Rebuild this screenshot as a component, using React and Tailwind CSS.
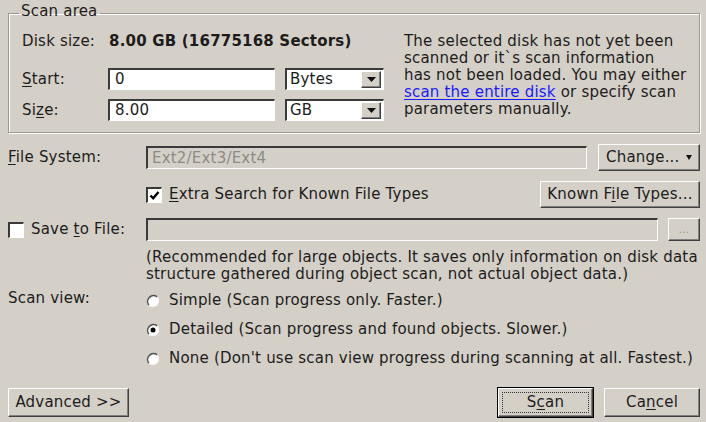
import React from 'react';

const raised =
  "bg-[#d4d0c8] border border-t-white border-l-white border-r-[#404040] border-b-[#404040] shadow-[inset_-1px_-1px_0_#808080]";
const sunken =
  "border-t-2 border-l-2 border-t-[#3a3a3a] border-l-[#3a3a3a] border-b border-r border-b-white border-r-white";

function U({ children }) {
  return <span className="underline underline-offset-2">{children}</span>;
}

function Arrow({ w = 9 }) {
  return (
    <svg width={w} height="5" viewBox="0 0 9 5" preserveAspectRatio="none">
      <path d="M0 0 H9 L4.5 5 Z" fill="#111" />
    </svg>
  );
}

function Combo({ value }) {
  return (
    <div className={`w-[99px] h-[22px] bg-white flex items-center ${sunken}`}>
      <span className="flex-1 pl-[3px]">{value}</span>
      <div className={`w-[20px] h-[17px] mr-[2px] flex items-center justify-center ${raised}`}>
        <Arrow w={9} />
      </div>
    </div>
  );
}

function CheckBox({ checked }) {
  return (
    <div className={`w-[16px] h-[16px] bg-white shrink-0 flex items-center justify-center ${sunken}`}>
      {checked && (
        <svg width="11" height="11" viewBox="0 0 11 11">
          <path d="M1.5 5.5 L4.2 8.3 L9.5 2" stroke="#000" strokeWidth="2.4" fill="none" />
        </svg>
      )}
    </div>
  );
}

function Radio({ checked }) {
  return (
    <svg width="14" height="14" viewBox="0 0 14 14" className="shrink-0">
      <circle cx="7" cy="7" r="6" fill="#fff" />
      <path d="M2.8 11.2 A6 6 0 0 1 11.2 2.8" stroke="#555" strokeWidth="1.6" fill="none" />
      <path d="M11.2 2.8 A6 6 0 0 1 2.8 11.2" stroke="#f4f4f4" strokeWidth="1.2" fill="none" />
      {checked && <circle cx="7" cy="7" r="2.5" fill="#000" />}
    </svg>
  );
}

function RadioRow({ checked, children }) {
  return (
    <div className="h-[29px] flex items-center gap-[9px]">
      <Radio checked={checked} />
      <span className="whitespace-nowrap">{children}</span>
    </div>
  );
}

export default function App() {
  return (
    <div className="w-[706px] h-[422px] bg-[#d4d0c8] text-[#1c1c1c] text-[15px] tracking-[0.2px] leading-[17px] font-['DejaVu_Sans',sans-serif] flex flex-col pl-[8px] pr-[6px] pt-[4px] overflow-hidden">
      {/* Scan area */}
      <fieldset className="border border-[#9c988f] shadow-[inset_1px_1px_0_#fff,1px_1px_0_#fff] pl-[13px] pr-[8px] pt-[10px] pb-[11px] m-0">
        <legend className="-ml-[3px] px-[2px] leading-[14px] pb-[5px]">Scan area</legend>
        <div className="flex items-start">
          <div className="w-[362px] flex flex-col">
            <div className="flex items-center h-[17px]">
              <span className="w-[87px]">Disk size:</span>
              <span className="font-bold whitespace-nowrap">8.00 GB (16775168 Sectors)</span>
            </div>
            <div className="flex items-center mt-[18px]">
              <span className="w-[86px]"><U>S</U>tart:</span>
              <div className={`w-[167px] h-[22px] bg-white flex items-center pl-[5px] ${sunken}`}>0</div>
              <div className="ml-[10px]"><Combo value="Bytes" /></div>
            </div>
            <div className="flex items-center mt-[9px]">
              <span className="w-[86px]">Si<U>z</U>e:</span>
              <div className={`w-[167px] h-[22px] bg-white flex items-center pl-[5px] ${sunken}`}>8.00</div>
              <div className="ml-[10px]"><Combo value="GB" /></div>
            </div>
          </div>
          <p className="ml-[20px] whitespace-nowrap">
            The selected disk has not yet been<br />
            scanned or it`s scan information<br />
            has not been loaded. You may either<br />
            <span className="text-[#1a1aff] underline underline-offset-2">scan the entire disk</span> or specify scan<br />
            parameters manually.
          </p>
        </div>
      </fieldset>

      {/* File System */}
      <div className="flex items-center mt-[11px] h-[27px]">
        <span className="w-[138px]"><U>F</U>ile System:</span>
        <div className={`flex-1 h-[23px] flex items-center pl-[4px] text-[#8c8a85] ${sunken}`}>Ext2/Ext3/Ext4</div>
        <div className={`ml-[11px] w-[102px] h-[27px] flex items-center justify-between pl-[7px] pr-[7px] ${raised}`}>
          <span>Change...</span>
          <Arrow w={6} />
        </div>
      </div>

      {/* Extra search */}
      <div className="flex items-center mt-[10px] h-[27px]">
        <div className="w-[138px]" />
        <CheckBox checked />
        <span className="ml-[7px]"><U>E</U>xtra Search for Known File Types</span>
        <div className={`ml-auto w-[160px] h-[27px] flex items-center justify-center ${raised}`}>
          <span>Known F<U>i</U>le Types...</span>
        </div>
      </div>

      {/* Save to file */}
      <div className="flex items-center mt-[10px] h-[23px]">
        <div className="w-[138px] flex items-center">
          <CheckBox />
          <span className="ml-[7px]">Save <U>t</U>o File:</span>
        </div>
        <div className={`flex-1 h-[23px] ${sunken}`} />
        <div className={`ml-[10px] w-[32px] h-[23px] flex items-center justify-center text-[#9a978f] text-[11px] ${raised}`}>...</div>
      </div>

      {/* Note */}
      <div className="ml-[138px] mt-[8px] flex flex-col whitespace-nowrap">
        <span>(Recommended for large objects. It saves only information on disk data</span>
        <span>structure gathered during object scan, not actual object data.)</span>
      </div>

      {/* Scan view */}
      <div className="flex mt-[3px]">
        <span className="w-[138px] pt-[4px]">Scan view:</span>
        <div className="flex flex-col">
          <RadioRow>Simple (Scan progress only. Faster.)</RadioRow>
          <RadioRow checked>Detailed (Scan progress and found objects. Slower.)</RadioRow>
          <RadioRow>None (Don't use scan view progress during scanning at all. Fastest.)</RadioRow>
        </div>
      </div>

      {/* Bottom buttons */}
      <div className="flex items-center mt-auto mb-[4px]">
        <div className={`w-[121px] h-[29px] flex items-center justify-center ${raised}`}>Advanced &gt;&gt;</div>
        <div className="ml-auto w-[97px] h-[31px] border border-black flex">
          <div className={`flex-1 flex p-[3px] ${raised}`}>
            <div className="flex-1 border border-dotted border-[#333] flex items-center justify-center">
              <span>S<U>c</U>an</span>
            </div>
          </div>
        </div>
        <div className={`ml-[10px] w-[96px] h-[29px] flex items-center justify-center ${raised}`}>
          <span>Ca<U>n</U>cel</span>
        </div>
      </div>
    </div>
  );
}
